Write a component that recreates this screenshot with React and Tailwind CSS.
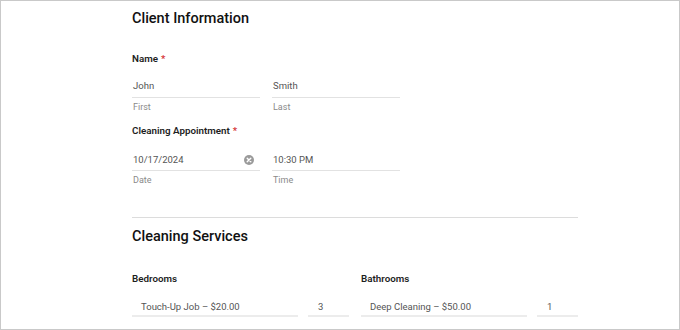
const Field = ({ value, sub, icon, className, pad = "pt-[13px] pb-[4px]" }) => (
  <div className={className}>
    <div className={`flex items-center justify-between border-b border-[#e2e2e2] ${pad} pl-[1px] pr-[6px] text-[9.5px] leading-[14px] text-[#555]`}>
      <span>{value}</span>
      {icon}
    </div>
    <div className="mt-[3px] pl-[1px] text-[9px] leading-[12px] text-[#8a8a8a]">{sub}</div>
  </div>
);

const ClearIcon = () => (
  <svg width="10" height="10" viewBox="0 0 10 10" className="-mt-[1px]">
    <circle cx="5" cy="5" r="5" fill="#9a9a9a" />
    <path d="M3.2 3.2 L6.8 6.8 M6.8 3.2 L3.2 6.8" stroke="#fff" strokeWidth="1.4" strokeLinecap="round" />
  </svg>
);

const Label = ({ children, required, className }) => (
  <div className={`text-[9.8px] leading-[14px] font-semibold text-[#1e1e1e] ${className}`}>
    {children}
    {required && <span className="ml-[3px] text-[#d63638]">*</span>}
  </div>
);

const ServiceRow = ({ label, choice, qty }) => (
  <div className="w-[217px]">
    <Label>{label}</Label>
    <div className="mt-[14px] flex gap-[10px] text-[9.5px] leading-[14px] text-[#555]">
      <div className="w-[166px] border-b-2 border-[#ececec] pb-[1px] pl-[9px]">{choice}</div>
      <div className="w-[41px] border-b-2 border-[#ececec] pb-[1px] pl-[10px]">{qty}</div>
    </div>
  </div>
);

export default function App() {
  return (
    <div
      className="w-[680px] h-[330px] overflow-hidden border border-[#c9c9c9] bg-white"
      style={{ fontFamily: "Roboto, 'Liberation Sans', sans-serif" }}
    >
      <div className="w-[446px] ml-[131px] pt-[8px]">
        <h2 className="text-[14.5px] leading-[20px] font-medium text-[#111]">Client Information</h2>

        <Label required className="mt-[23px]">Name</Label>
        <div className="flex gap-[12px]">
          <Field className="w-[128px]" value="John" sub="First" />
          <Field className="w-[128px]" value="Smith" sub="Last" />
        </div>

        <Label required className="mt-[11px]">Cleaning Appointment</Label>
        <div className="flex gap-[12px]">
          <Field className="w-[128px]" value="10/17/2024" sub="Date" icon={<ClearIcon />} pad="pt-[15px] pb-[3px]" />
          <Field className="w-[128px]" value="10:30 PM" sub="Time" pad="pt-[15px] pb-[3px]" />
        </div>

        <div className="mt-[31px] h-[1px] bg-[#dcdcdc]" />

        <h2 className="mt-[9px] text-[14.5px] leading-[20px] font-medium text-[#111]">Cleaning Services</h2>

        <div className="mt-[25px] flex gap-[12px]">
          <ServiceRow label="Bedrooms" choice="Touch-Up Job – $20.00" qty="3" />
          <ServiceRow label="Bathrooms" choice="Deep Cleaning – $50.00" qty="1" />
        </div>
      </div>
    </div>
  );
}
